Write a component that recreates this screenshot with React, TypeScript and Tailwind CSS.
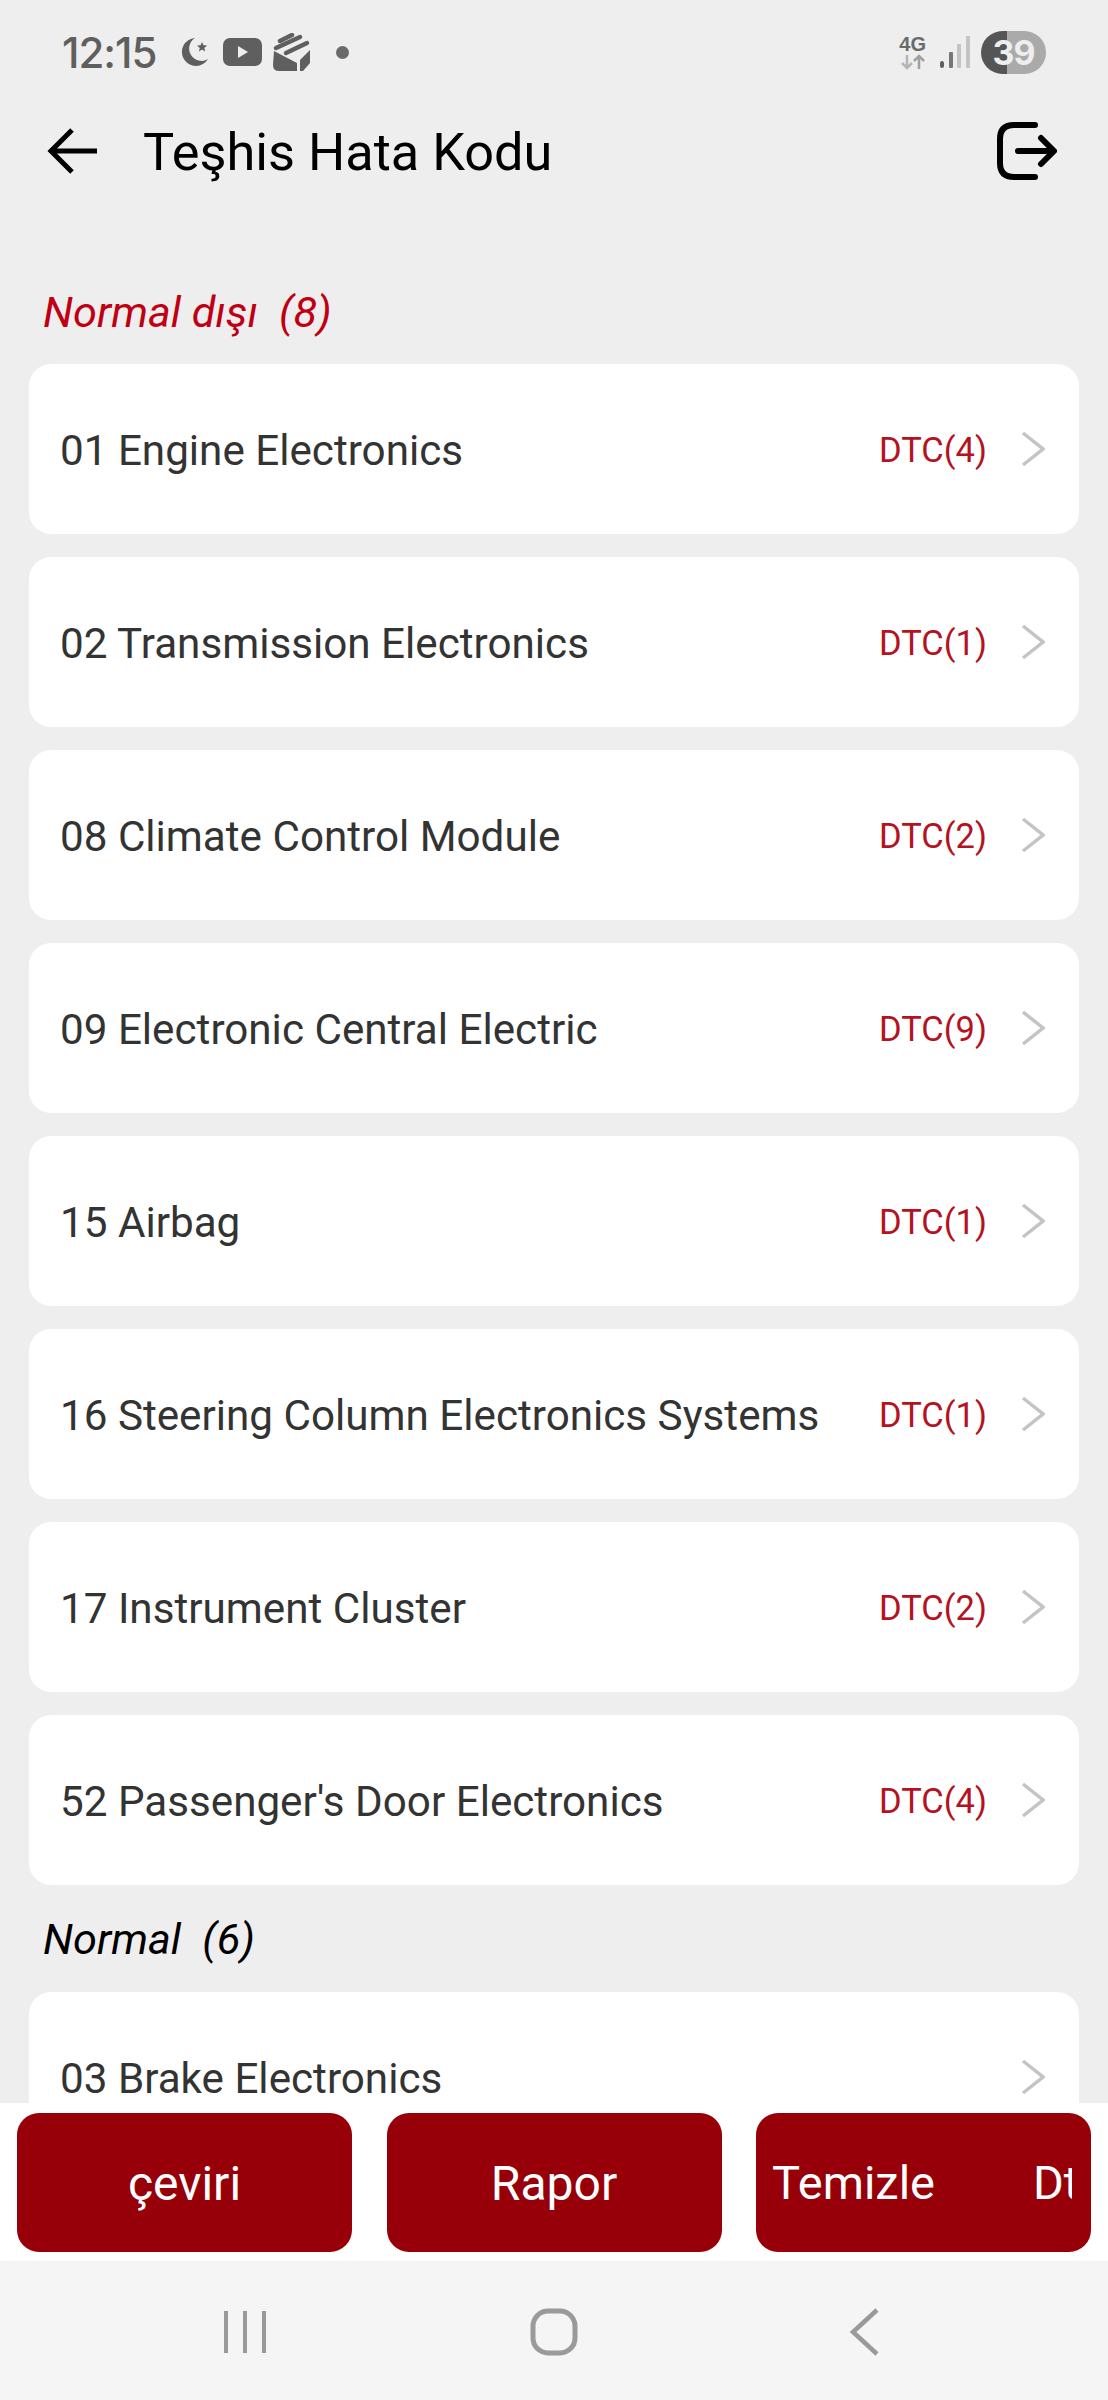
const faults = [
  { name: "01 Engine Electronics", count: 4 },
  { name: "02 Transmission Electronics", count: 1 },
  { name: "08 Climate Control Module", count: 2 },
  { name: "09 Electronic Central Electric", count: 9 },
  { name: "15 Airbag", count: 1 },
  { name: "16 Steering Column Electronics Systems", count: 1 },
  { name: "17 Instrument Cluster", count: 2 },
  { name: "52 Passenger's Door Electronics", count: 4 },
];

function Chevron() {
  return (
    <svg width="24" height="36" viewBox="0 0 24 36" fill="none" className="shrink-0">
      <path d="M2 2 L22 18 L2 34" stroke="#c4c4c4" strokeWidth="3.5" />
    </svg>
  );
}

function Row({ name, count }: { name: string; count?: number }) {
  return (
    <div className="flex h-[170px] shrink-0 items-center rounded-[22px] bg-white pl-[31px] pr-[34px]">
      <span className="flex-1 pt-[4px] text-[42.2px] text-[#333333]">{name}</span>
      {count !== undefined && (
        <span className="pt-[4px] text-[34.5px] text-[#b5121f]">DTC({count})</span>
      )}
      <div className="ml-[34px]">
        <Chevron />
      </div>
    </div>
  );
}

function StatusBar() {
  return (
    <div className="flex h-[104px] shrink-0 items-center pl-[62px] pr-[62px] text-[#5f5f5f]">
      <span className="w-[93px] font-['Inter',sans-serif] text-[42px] font-medium tracking-[-1px]">12:15</span>
      <svg width="28" height="28" viewBox="0 0 28 28" className="ml-[26px]" fill="#5f5f5f">
        <path d="M14 0 A14 14 0 1 0 27 21 A11 11 0 0 1 14 0 Z" />
        <path d="M21 4 l1.5 3.3 3.6 .3 -2.8 2.3 .9 3.5 -3.2-1.9 -3.1 1.9 .9-3.5 -2.8-2.3 3.6-.3 Z" />
      </svg>
      <svg width="39" height="28" viewBox="0 0 39 28" className="ml-[14px]">
        <rect width="39" height="28" rx="7" fill="#5f5f5f" />
        <path d="M15 8 L25 14 L15 20 Z" fill="#eeeeee" />
      </svg>
      <svg width="38" height="38" viewBox="0 0 38 38" className="ml-[11px]">
        <g fill="none" stroke="#5f5f5f" strokeWidth="4.5" strokeLinecap="round">
          <path d="M7 8 L19 2" />
          <path d="M3 15 L27 4" />
          <path d="M13 20 L34 10" />
        </g>
        <g fill="#5f5f5f">
          <path d="M1 18 L24 30 V38 H6 Q0 38 0 32 Z" />
          <path d="M27 27 L37 17 V30 L30 38 H27 Z" />
        </g>
      </svg>
      <div className="ml-[25px] h-[13px] w-[13px] rounded-full bg-[#6a6a6a]" />
      <div className="flex-1" />
      <div className="flex flex-col items-center">
        <span className="font-['Liberation_Sans',sans-serif] text-[20px] font-bold leading-[20px] text-[#6a6a6a]">4G</span>
        <svg width="26" height="16" viewBox="0 0 26 16" fill="none" strokeWidth="2.5">
          <path d="M7 1 V14 M2 9 L7 14 L12 9" stroke="#b5b5b5" />
          <path d="M19 15 V2 M14 7 L19 2 L24 7" stroke="#a0a0a0" />
        </svg>
      </div>
      <svg width="30" height="32" viewBox="0 0 30 32" className="ml-[14px]">
        <rect x="0" y="25" width="4" height="7" rx="2" fill="#5f5f5f" />
        <rect x="9" y="16" width="4" height="16" rx="1" fill="#777777" />
        <rect x="17" y="8" width="4" height="24" rx="1" fill="#c4c4c4" />
        <rect x="26" y="0" width="4" height="32" rx="1" fill="#c4c4c4" />
      </svg>
      <div className="ml-[11px] flex h-[43px] w-[65px] items-center justify-center rounded-full bg-[linear-gradient(90deg,#555555_40%,#aaaaaa_40%)] font-['Inter',sans-serif] text-[34px] font-bold tracking-[-1px] text-[#eeeeee]">
        39
      </div>
    </div>
  );
}

function Header() {
  return (
    <div className="flex h-[94px] shrink-0 items-center pl-[47px] pr-[51px]">
      <svg width="50" height="46" viewBox="0 0 50 46" fill="none" stroke="#000000" strokeWidth="5">
        <path d="M50 23 H4 M25 2 L4 23 L25 44" />
      </svg>
      <h1 className="ml-[46px] flex-1 pt-[2px] text-[52.3px] font-normal text-black">Teşhis Hata Kodu</h1>
      <svg width="60" height="58" viewBox="0 0 60 58" fill="none" stroke="#000000" strokeWidth="6" strokeLinecap="round" strokeLinejoin="round">
        <path d="M38 3 H17 Q3 3 3 17 V41 Q3 55 17 55 H38" />
        <path d="M21 29 H56 M44 16 L57 29 L44 42" />
      </svg>
    </div>
  );
}

export default function App() {
  return (
    <div className="flex h-[2400px] w-[1108px] flex-col overflow-hidden bg-[#eeeeee] font-['Roboto',sans-serif]">
      <StatusBar />
      <Header />

      <main className="min-h-0 flex-1 overflow-hidden px-[29px] pt-[59px]">
        <div className="flex h-[107px] items-center pl-[14px] pt-[6px] text-[43.3px] italic text-[#c00012]">
          <span className="whitespace-pre">Normal dışı  (8)</span>
        </div>
        <div className="flex flex-col gap-[23px]">
          {faults.map((f) => (
            <Row key={f.name} name={f.name} count={f.count} />
          ))}
        </div>
        <div className="flex h-[107px] items-center pl-[14px] pt-[4px] text-[43.3px] italic text-black">
          <span className="whitespace-pre">Normal  (6)</span>
        </div>
        <Row name="03 Brake Electronics" />
      </main>

      <div className="flex h-[158px] shrink-0 justify-between bg-white pl-[17px] pr-[17px] pt-[10px]">
        <button className="flex h-[139px] w-[335px] items-center justify-center rounded-[22px] bg-[#970008] pt-[2px] text-[48px] text-white">
          çeviri
        </button>
        <button className="flex h-[139px] w-[335px] items-center justify-center rounded-[22px] bg-[#970008] pt-[2px] text-[48px] text-white">
          Rapor
        </button>
        <button className="flex h-[139px] w-[335px] items-center rounded-[22px] bg-[#970008] pl-[16px] pr-[19px] pt-[2px] text-[47px] text-white">
          <div className="flex w-full gap-[98px] overflow-hidden whitespace-nowrap">
            <span>Temizle</span>
            <span>Dtc</span>
          </div>
        </button>
      </div>

      <div className="flex h-[139px] shrink-0 items-center justify-between bg-[#f5f5f5] pl-[224px] pr-[229px] pt-[2px]">
        <svg width="42" height="44" viewBox="0 0 42 44" stroke="#9a9a9a" strokeWidth="4">
          <path d="M2 1 V43 M21 1 V43 M40 1 V43" />
        </svg>
        <svg width="48" height="48" viewBox="0 0 48 48" fill="none" stroke="#9a9a9a" strokeWidth="5" className="mr-[7px]">
          <rect x="3" y="3" width="42" height="42" rx="15" />
        </svg>
        <svg width="30" height="48" viewBox="0 0 30 48" fill="none" stroke="#9a9a9a" strokeWidth="4.5">
          <path d="M28 2 L4 24 L28 46" />
        </svg>
      </div>
    </div>
  );
}
